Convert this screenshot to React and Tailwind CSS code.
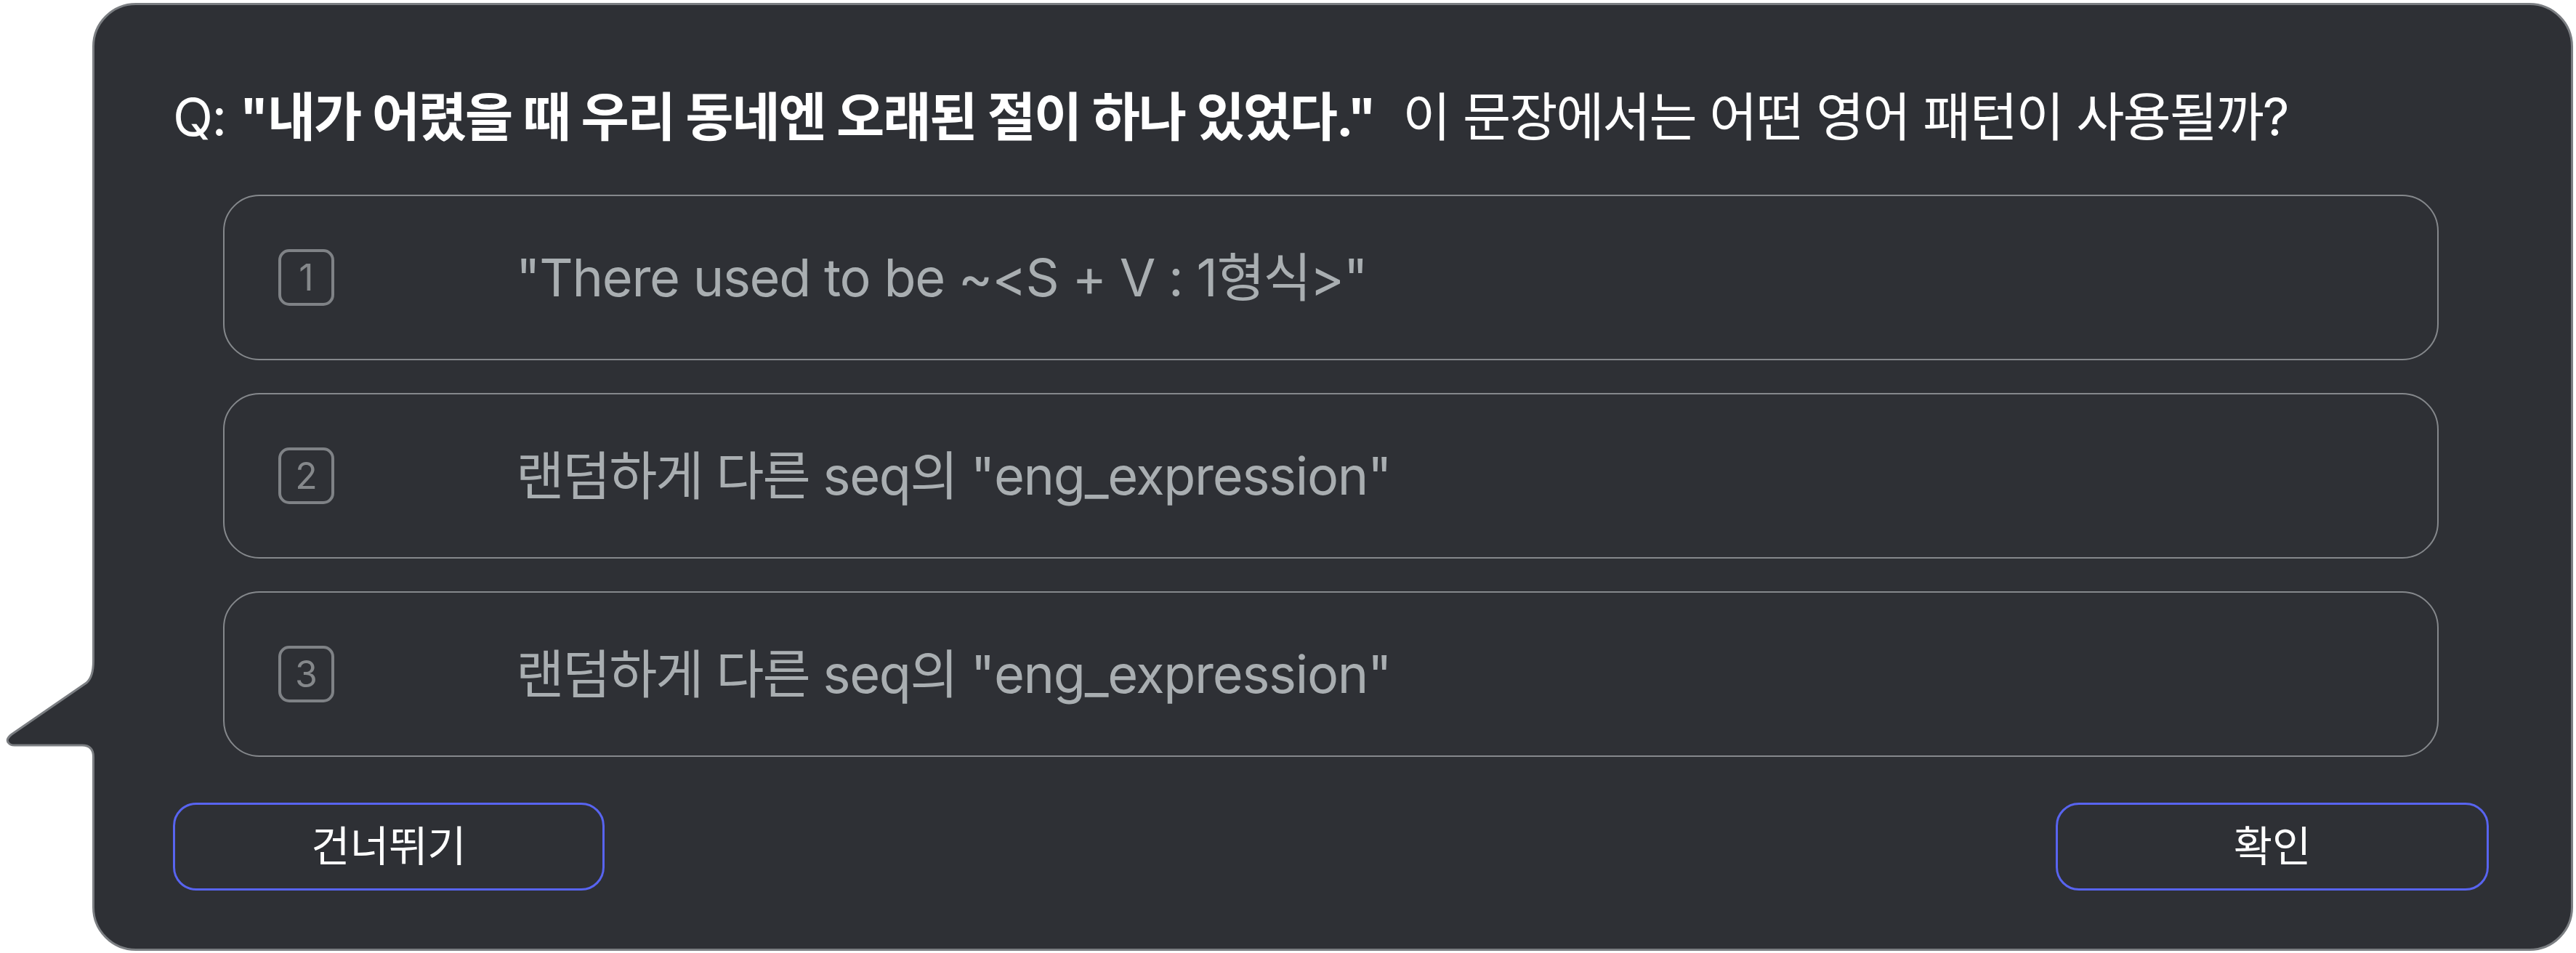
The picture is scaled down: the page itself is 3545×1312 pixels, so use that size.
import React from "react";

const HANGUL = /([\uAC00-\uD7A3]+)/;

function T({ text, k = "tracking-[-0.03em]" }) {
  const parts = text.split(HANGUL);
  return (
    <>
      {parts.map((p, i) =>
        HANGUL.test(p) ? (
          <span key={i} className={k}>
            {p}
          </span>
        ) : (
          <span key={i}>{p}</span>
        )
      )}
    </>
  );
}

function Option({ n, text }) {
  return (
    <div className="flex h-[228px] items-center rounded-[50px] border-2 border-[#85888c] pl-[74px]">
      <div className="flex h-[78px] w-[77px] shrink-0 items-center justify-center rounded-[15px] border-4 border-[#7f8286] text-[50px] leading-none text-[#85888b]">
        {n}
      </div>
      <div className="ml-[250px] whitespace-pre text-[72px] leading-none tracking-[-0.018em] text-[#a9aeb1]">
        <T text={text} />
      </div>
    </div>
  );
}

export default function App() {
  return (
    <div
      className="relative h-[1312px] w-[3545px] bg-white pl-[127px] pt-[4px]"
      style={{ fontFamily: 'Inter, "Noto Sans CJK KR", sans-serif' }}
    >
      <div className="relative flex h-[1305px] w-[3414px] flex-col rounded-[60px] border-[3px] border-[#7b7e82] bg-[#2e3035] pl-[108px] pr-[113px]">
        {/* speech tail */}
        <svg
          className="absolute left-[-130px] top-[893px]"
          width="140"
          height="160"
          viewBox="0 0 140 160"
        >
          <path
            d="M128.5 10 Q128.5 32 119 40 L16 111 Q7 118 12 123 Q14 126 20 126 L113 126 Q128.5 126 128.5 142 L140 142 L140 10 Z"
            fill="#2e3035"
          />
          <path
            d="M128.5 10 Q128.5 32 119 40 L16 111 Q7 118 12 123 Q14 126 20 126 L113 126 Q128.5 126 128.5 142"
            fill="none"
            stroke="#7b7e82"
            strokeWidth="3"
          />
        </svg>

        <div className="mt-[111px] h-[86px] whitespace-pre text-[72px] leading-[86px] tracking-[-0.02em] text-white">
          <T text="Q: " />
          <span className="font-bold">
            <T text={'"내가 어렸을 때 우리 동네엔 오래된 절이 하나 있었다."'} />
          </span>
          <T text={"  이 문장에서는 어떤 영어 패턴이 사용될까?"} />
        </div>

        <div className="ml-[69px] mr-[69px] mt-[64px] flex flex-col gap-[45px]">
          <Option n="1" text={'"There used to be ~<S + V : 1형식>"'} />
          <Option n="2" text={'랜덤하게 다른 seq의 "eng_expression"'} />
          <Option n="3" text={'랜덤하게 다른 seq의 "eng_expression"'} />
        </div>

        <div className="mt-[63px] flex justify-between">
          <button className="flex h-[121px] w-[594px] items-center justify-center rounded-[32px] border-[3px] border-[#5864f0] text-[58px] text-white">
            <T text="건너뛰기" k="tracking-normal" />
          </button>
          <button className="flex h-[121px] w-[596px] items-center justify-center rounded-[32px] border-[3px] border-[#5864f0] text-[58px] text-white">
            <T text="확인" k="tracking-normal" />
          </button>
        </div>
      </div>
    </div>
  );
}
